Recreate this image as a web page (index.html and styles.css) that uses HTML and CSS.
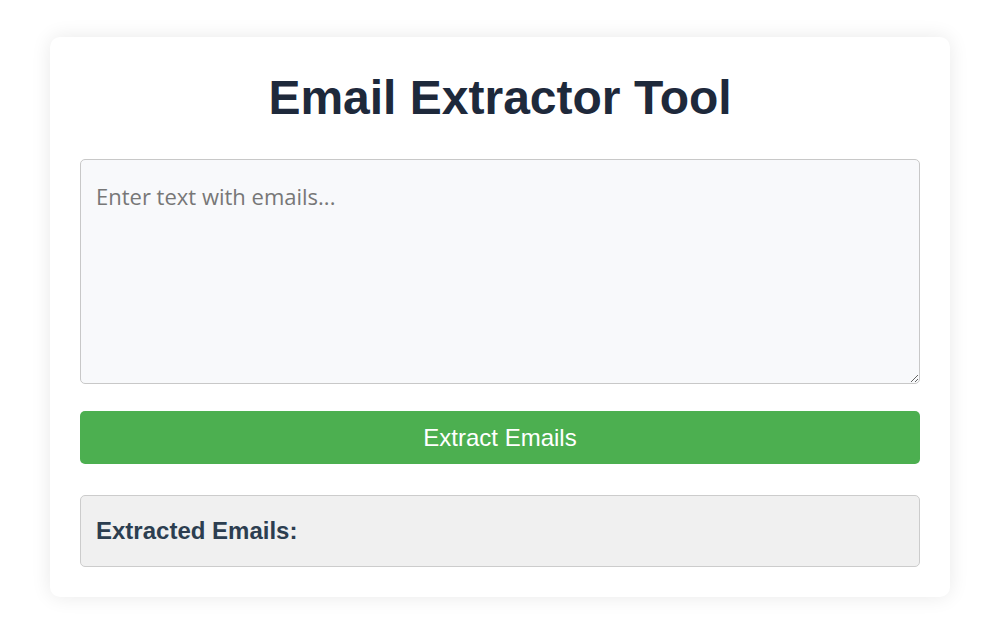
FILE: index.html
```html
<!DOCTYPE html>
<html lang="en">
<head>
<meta charset="utf-8">
<title>Email Extractor Tool</title>
<link rel="stylesheet" href="styles.css">
</head>
<body>
  <main class="card">
    <h1 class="title">Email Extractor Tool</h1>
    <textarea class="input" placeholder="Enter text with emails..."></textarea>
    <button class="extract-btn" type="button">Extract Emails</button>
    <section class="result">
      <h3 class="result-title">Extracted Emails:</h3>
    </section>
  </main>
</body>
</html>
```

FILE: styles.css
```css
html, body {
  margin: 0;
  padding: 0;
  background: #ffffff;
}

body {
  font-family: "Liberation Sans", Arial, sans-serif;
  padding: 37px 46px 40px 50px;
}

.card {
  box-sizing: border-box;
  width: 900px;
  background: #ffffff;
  border-radius: 10px;
  box-shadow: 0 0 20px rgba(0, 0, 0, 0.09);
  padding: 33px 30px 30px;
}

.title {
  margin: 0 0 33px;
  font-size: 48px;
  line-height: 56px;
  font-weight: 700;
  text-align: center;
  color: #1e293b;
}

.input {
  display: block;
  box-sizing: border-box;
  width: 100%;
  height: 225px;
  margin: 0 0 27px;
  padding: 17px 15px 15px;
  border: 1px solid #c8c8c8;
  border-radius: 5px;
  background: #f8f9fb;
  font-family: "Open Sans", "Noto Sans", sans-serif;
  font-size: 22px;
  line-height: 1.75;
  color: #333;
  resize: vertical;
}

.input::placeholder {
  color: #777777;
}

.extract-btn {
  display: block;
  width: 100%;
  box-sizing: border-box;
  padding: 12px;
  border: none;
  border-radius: 5px;
  background: #4caf50;
  color: #ffffff;
  font-family: "Liberation Sans", Arial, sans-serif;
  font-size: 24px;
  line-height: 29px;
  height: 53px;
  cursor: pointer;
}

.result {
  margin-top: 31px;
  padding: 21px 15px;
  border: 1px solid #cccccc;
  border-radius: 5px;
  background: #f0f0f0;
}

.result-title {
  margin: 0;
  font-size: 24px;
  line-height: 28px;
  font-weight: 700;
  color: #2c3e50;
}
```
